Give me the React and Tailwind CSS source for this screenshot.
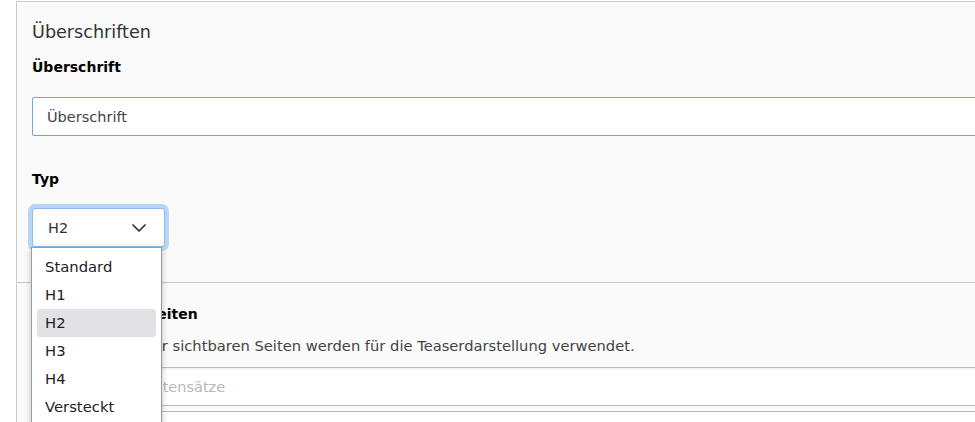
import React from "react";

const OPTIONS = ["Standard", "H1", "H2", "H3", "H4", "Versteckt"];

const Chevron = () => (
  <svg width="14" height="8" viewBox="0 0 14 8" fill="none">
    <path d="M1 1l6 6 6-6" stroke="#333" strokeWidth="1.7" strokeLinecap="round" strokeLinejoin="round" />
  </svg>
);

const App = () => {
  const selected = "H2";

  return (
    <div className="w-[975px] h-[422px] overflow-hidden bg-white font-['DejaVu_Sans',sans-serif]">
      <div className="ml-4 mt-px w-[1000px] border-l border-t border-[#cccccc] bg-[#fafafa]">
        {/* ── Überschriften ─────────────────────────────── */}
        <section className="pl-[15px] pt-[18px] pb-[35px]">
          <h2 className="text-[17.6px] leading-6 text-[#333]">Überschriften</h2>
          <label className="mt-[13px] block text-sm leading-5 font-bold text-black">Überschrift</label>
          <div className="mt-5 h-[39px] flex items-center border border-[#74a3d6] rounded-[2px] bg-white px-[14px] text-[14.5px] leading-5 text-[#444]">
            Überschrift
          </div>

          <label className="mt-[33px] block text-sm leading-5 font-bold text-black">Typ</label>
          <div className="relative mt-[19px] w-[133px]">
            <div className="h-[39px] flex items-center justify-between border border-[#8dbbeb] rounded-[3px] bg-white ring-4 ring-[#b8d7f6] pl-[15px] pr-[18px] text-[14.5px] leading-5 text-[#333]">
              <span>{selected}</span>
              <Chevron />
            </div>

            {/* geöffnete Auswahlliste */}
            <ul className="absolute left-[-1px] top-full z-10 w-[131px] border border-[#9d9d9d] bg-white px-[5px] pt-[5px] pb-2 shadow-[0_2px_6px_rgba(0,0,0,0.25)]">
              {OPTIONS.map((opt) => (
                <li
                  key={opt}
                  className={`h-7 pl-2 pt-[2px] text-[14.8px] leading-6 text-[#222] rounded-[3px] ${
                    opt === selected ? "bg-[#e1e1e6]" : ""
                  }`}
                >
                  {opt}
                </li>
              ))}
            </ul>
          </div>
        </section>

        {/* ── Seiten ─────────────────────────────────────── */}
        <section className="border-t border-[#c8c8c8] pl-[15px] pt-[21px]">
          <label className="block text-sm leading-5 font-bold text-black">Anzuzeigende Seiten</label>
          <p className="mt-3 text-[14.7px] leading-5 text-[#444]">
            Nur für alle Nutzer sichtbaren Seiten werden für die Teaserdarstellung verwendet.
          </p>
          <div className="mt-[11px] h-[39px] flex items-center border border-[#bbbbbb] rounded-[2px] bg-white shadow-[inset_0_1px_3px_rgba(0,0,0,0.08)] pl-[17px] pr-[14px] text-[14.5px] leading-5 text-[#b8b8b8]">
            Max. Anzahl Datensätze
          </div>
          <div className="mt-[5px] h-10 border-t border-[#bbbbbb] bg-white" />
        </section>
      </div>
    </div>
  );
};

export default App;
